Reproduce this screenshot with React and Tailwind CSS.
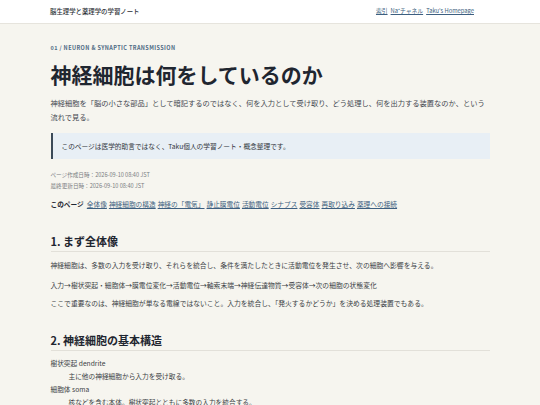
import React from 'react';

const font = { fontFamily: '"Noto Sans CJK JP", "Noto Sans", sans-serif' };

const tocLinks = ['全体像', '神経細胞の構造', '神経の「電気」', '静止膜電位', '活動電位', 'シナプス', '受容体', '再取り込み', '薬理への接続'];

const App = () => {
  return (
    <div className="min-h-[405px] bg-[#f6f5ef] text-[#262a30]" style={font}>
      <header className="h-[24px] bg-white border-b border-[#e6e4dd] flex items-center justify-between pl-[50px] pr-[66px]">
        <div className="text-[6.4px] font-medium text-[#2b2f35]">脳生理学と薬理学の学習ノート</div>
        <nav className="flex gap-[3px] text-[5.8px] text-[#3d5f80]">
          <a className="underline">索引</a>
          <a className="underline">Na⁺チャネル</a>
          <a className="underline">Taku's Homepage</a>
        </nav>
      </header>

      <main className="w-[439px] mx-auto">
        <div className="mt-[20px] text-[5.5px] leading-[8px] font-bold tracking-[0.4px] text-[#4f6b85]">
          01 / NEURON &amp; SYNAPTIC TRANSMISSION
        </div>
        <h1 className="mt-[8px] text-[21px] leading-[28px] font-bold text-[#1f2630]">神経細胞は何をしているのか</h1>
        <p className="mt-[8px] text-[7.25px] leading-[14px] text-[#444850] -mr-[4px]">
          神経細胞を「脳の小さな部品」として暗記するのではなく、何を入力として受け取り、どう処理し、何を出力する装置なのか、という<br />流れで見る。
        </p>

        <div className="mt-[9px] h-[26px] flex items-center bg-[#e8eff5] border-l-2 border-[#3b4a58] pl-[9px] text-[6.7px] text-[#30353c]">
          このページは医学的助言ではなく、Taku個人の学習ノート・概念整理です。
        </div>

        <div className="mt-[11px] text-[5.6px] leading-[11px] text-[#7a7d82]">
          <div>ページ作成日時：2026-09-10 08:40 JST</div>
          <div>最終更新日時：2026-09-10 08:40 JST</div>
        </div>

        <div className="mt-[6px] text-[6.7px] leading-[12px] flex flex-wrap gap-x-[2px]">
          <span className="font-bold text-[#1f2630] mr-[1px]">このページ</span>
          {tocLinks.map((t) => (
            <a key={t} className="underline text-[#3d5f80]">{t}</a>
          ))}
        </div>

        <h2 className="mt-[24px] text-[11px] leading-[14px] font-bold pb-[3px] border-b border-[#e2e0d9] text-[#1f2630]">1. まず全体像</h2>
        <div className="text-[6.8px] leading-[12px] text-[#3a3e44]">
          <p className="mt-[7px]">神経細胞は、多数の入力を受け取り、それらを統合し、条件を満たしたときに活動電位を発生させ、次の細胞へ影響を与える。</p>
          <p className="mt-[8px]">入力→樹状突起・細胞体→膜電位変化→活動電位→軸索末端→神経伝達物質→受容体→次の細胞の状態変化</p>
          <p className="mt-[6px]">ここで重要なのは、神経細胞が単なる電線ではないこと。入力を統合し、「発火するかどうか」を決める処理装置でもある。</p>
        </div>

        <h2 className="mt-[24px] text-[11px] leading-[14px] font-bold pb-[3px] border-b border-[#e2e0d9] text-[#1f2630]">2. 神経細胞の基本構造</h2>
        <dl className="mt-[6px] text-[6.7px] leading-[13px] text-[#3a3e44]">
          <dt>樹状突起 dendrite</dt>
          <dd className="ml-[18px]">主に他の神経細胞から入力を受け取る。</dd>
          <dt>細胞体 soma</dt>
          <dd className="ml-[18px]">核などを含む本体。樹状突起とともに多数の入力を統合する。</dd>
        </dl>
      </main>
    </div>
  );
};

export default App;
